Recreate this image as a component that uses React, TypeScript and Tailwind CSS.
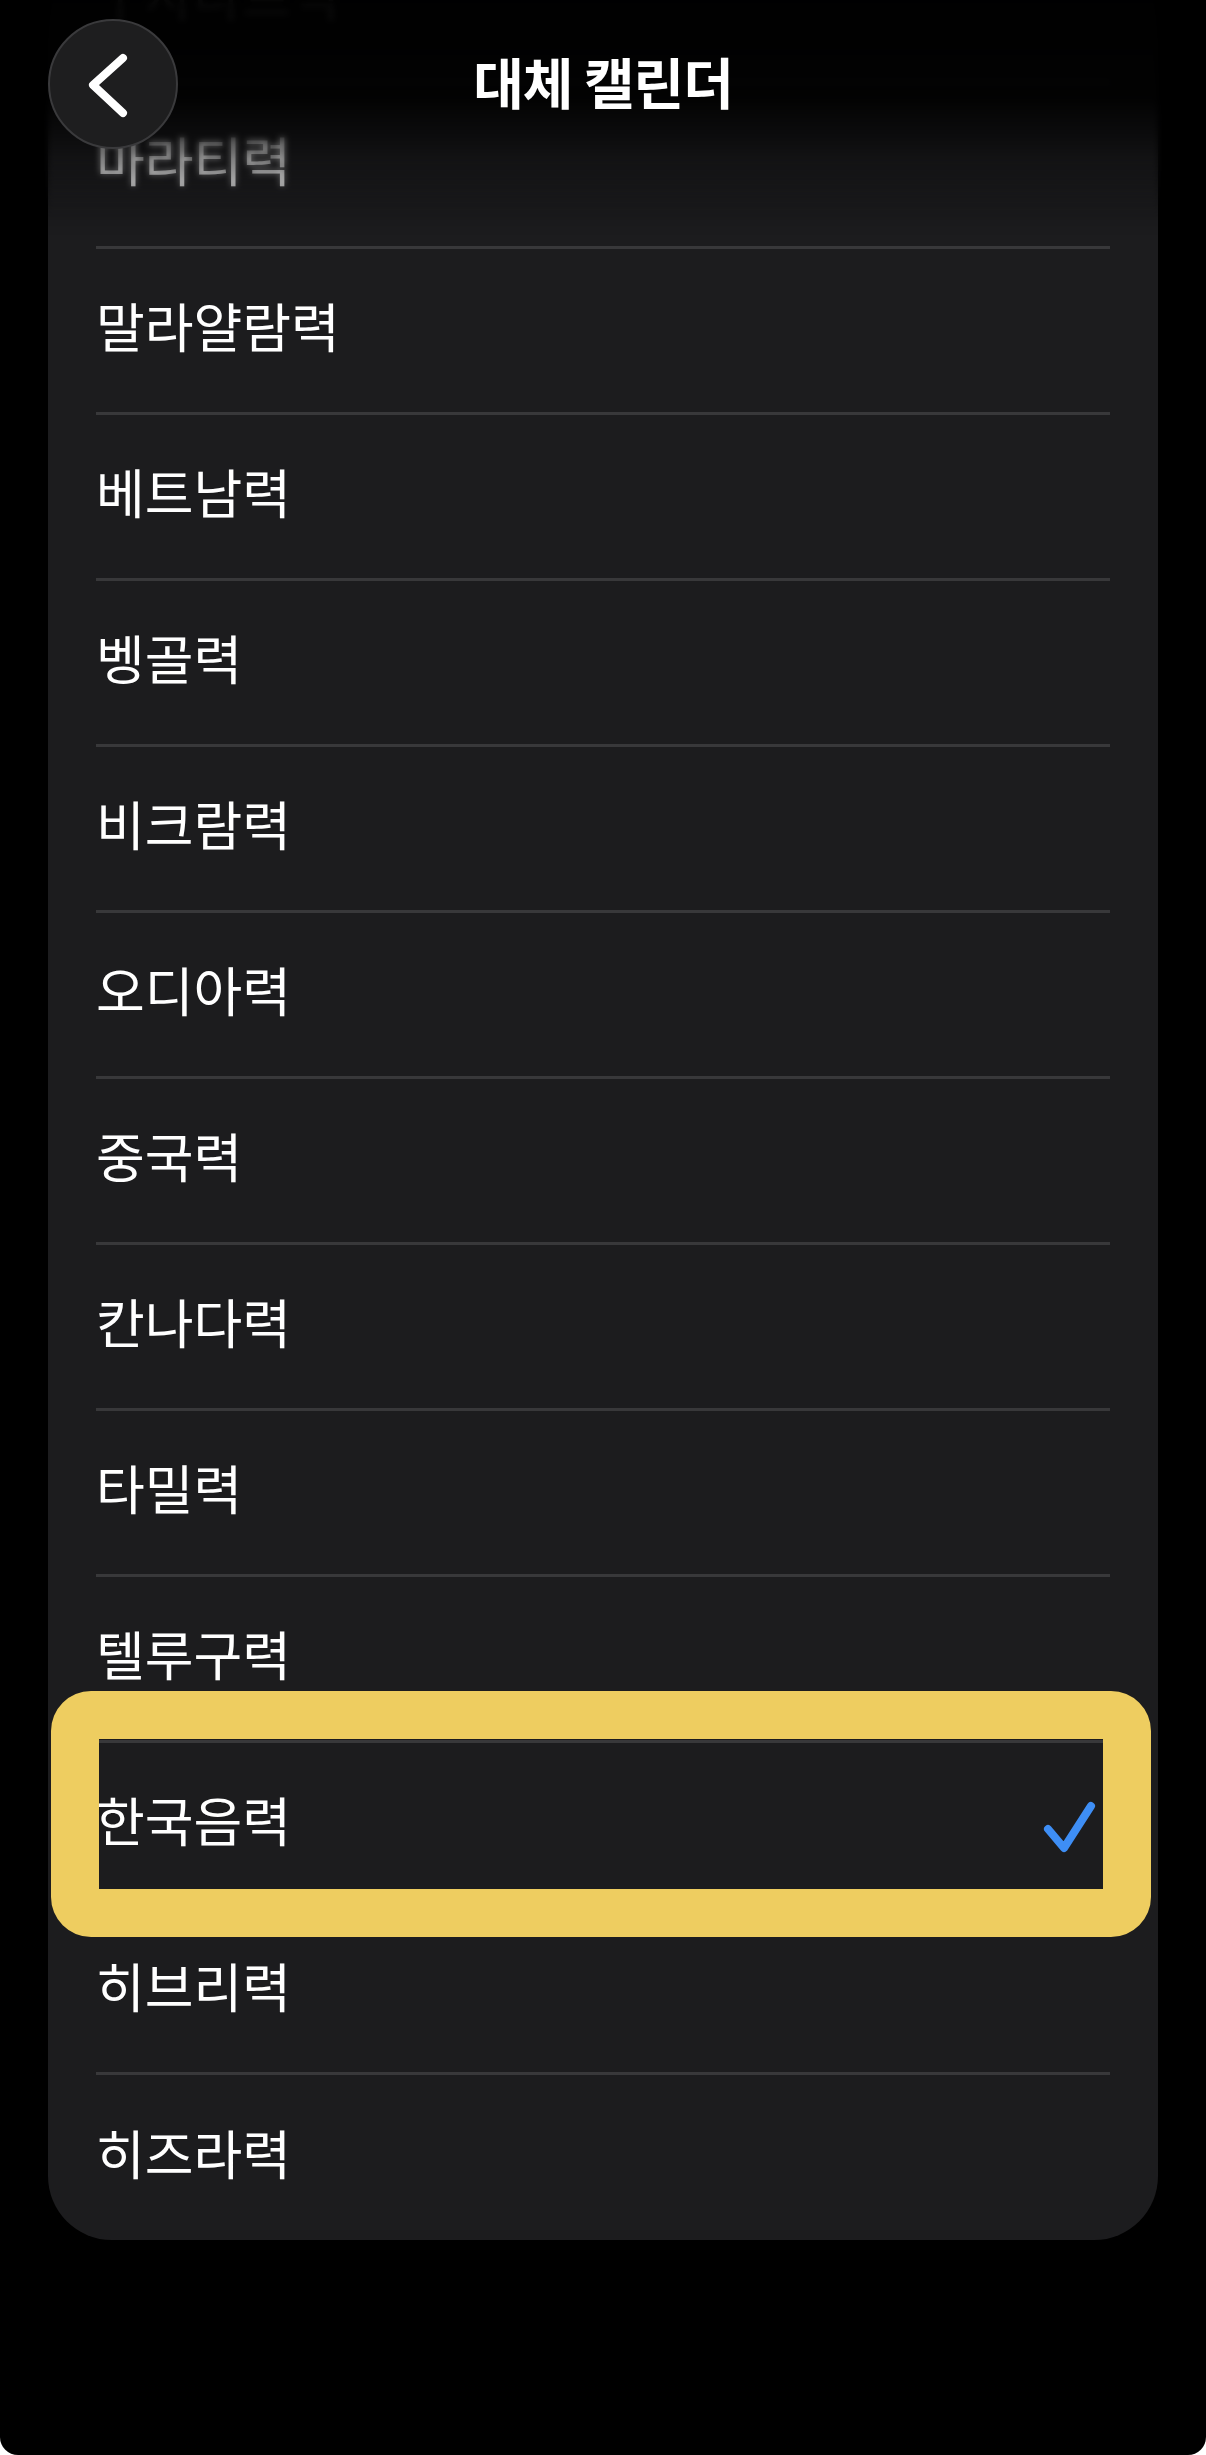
import React from "react";

const items = [
  "구자라트력",
  "마라티력",
  "말라얄람력",
  "베트남력",
  "벵골력",
  "비크람력",
  "오디아력",
  "중국력",
  "칸나다력",
  "타밀력",
  "텔루구력",
  "한국음력",
  "히브리력",
  "히즈라력",
];

export default function App() {
  return (
    <div className="min-h-[2455px] w-[1206px] bg-white">
      <div
        className="relative h-[2455px] w-[1206px] overflow-hidden rounded-b-[18px] bg-black"
        style={{ fontFamily: '"Noto Sans CJK KR", "Noto Sans", sans-serif' }}
      >
        <div className="px-[48px]">
          <div className="overflow-hidden rounded-b-[64px] bg-[#1c1c1e]">
            <div className="-mt-[83px]">
              {items.map((name, i) => {
                const last = i === items.length - 1;
                const selected = name === "한국음력";
                return (
                  <div key={name} className="mx-[48px]">
                    <div
                      className={
                        last
                          ? "flex h-[165px] items-center justify-between"
                          : "flex h-[163px] items-center justify-between"
                      }
                    >
                      <span className="mb-[10px] text-[53px] leading-none text-white">
                        {name}
                      </span>
                      {selected && (
                        <svg width="72" height="64" viewBox="0 0 72 64" fill="none">
                          <path
                            d="M10 36 L26 55 L53 13"
                            stroke="#3e8ef5"
                            strokeWidth="8"
                            strokeLinecap="round"
                            strokeLinejoin="round"
                          />
                        </svg>
                      )}
                    </div>
                    {!last && <div className="h-[3px] bg-[#38383a]" />}
                  </div>
                );
              })}
            </div>
          </div>
        </div>

        {/* top progressive blur + fade */}
        <div className="pointer-events-none absolute inset-x-0 top-0 h-[220px] backdrop-blur-[3px] [mask-image:linear-gradient(to_bottom,black_0%,black_55%,transparent_100%)]" />
        <div className="pointer-events-none absolute inset-x-0 top-0 h-[235px] bg-[linear-gradient(to_bottom,rgba(0,0,0,0.97)_0%,rgba(0,0,0,0.9)_42%,rgba(0,0,0,0.3)_68%,rgba(0,0,0,0)_100%)]" />

        {/* header */}
        <div className="absolute inset-x-0 top-0 flex h-[160px] items-center justify-center">
          <span className="text-[55px] font-bold leading-none tracking-[-1px] text-white">
            대체 캘린더
          </span>
        </div>
        <button className="absolute left-[48px] top-[19px] flex h-[130px] w-[130px] items-center justify-center rounded-full border-[2px] border-[#3a3a3c] bg-[#1e1e1f]">
          <svg width="130" height="130" viewBox="0 0 130 130" fill="none" className="absolute left-[-2px] top-[-2px]">
            <path
              d="M75 39 L45 66 L75 94"
              stroke="white"
              strokeWidth="8"
              strokeLinecap="round"
              strokeLinejoin="round"
            />
          </svg>
        </button>

        {/* yellow highlight annotation */}
        <div className="pointer-events-none absolute left-[51px] top-[1691px] h-[246px] w-[1100px] rounded-[40px] border-[48px] border-[#eecd60]" />
      </div>
    </div>
  );
}
